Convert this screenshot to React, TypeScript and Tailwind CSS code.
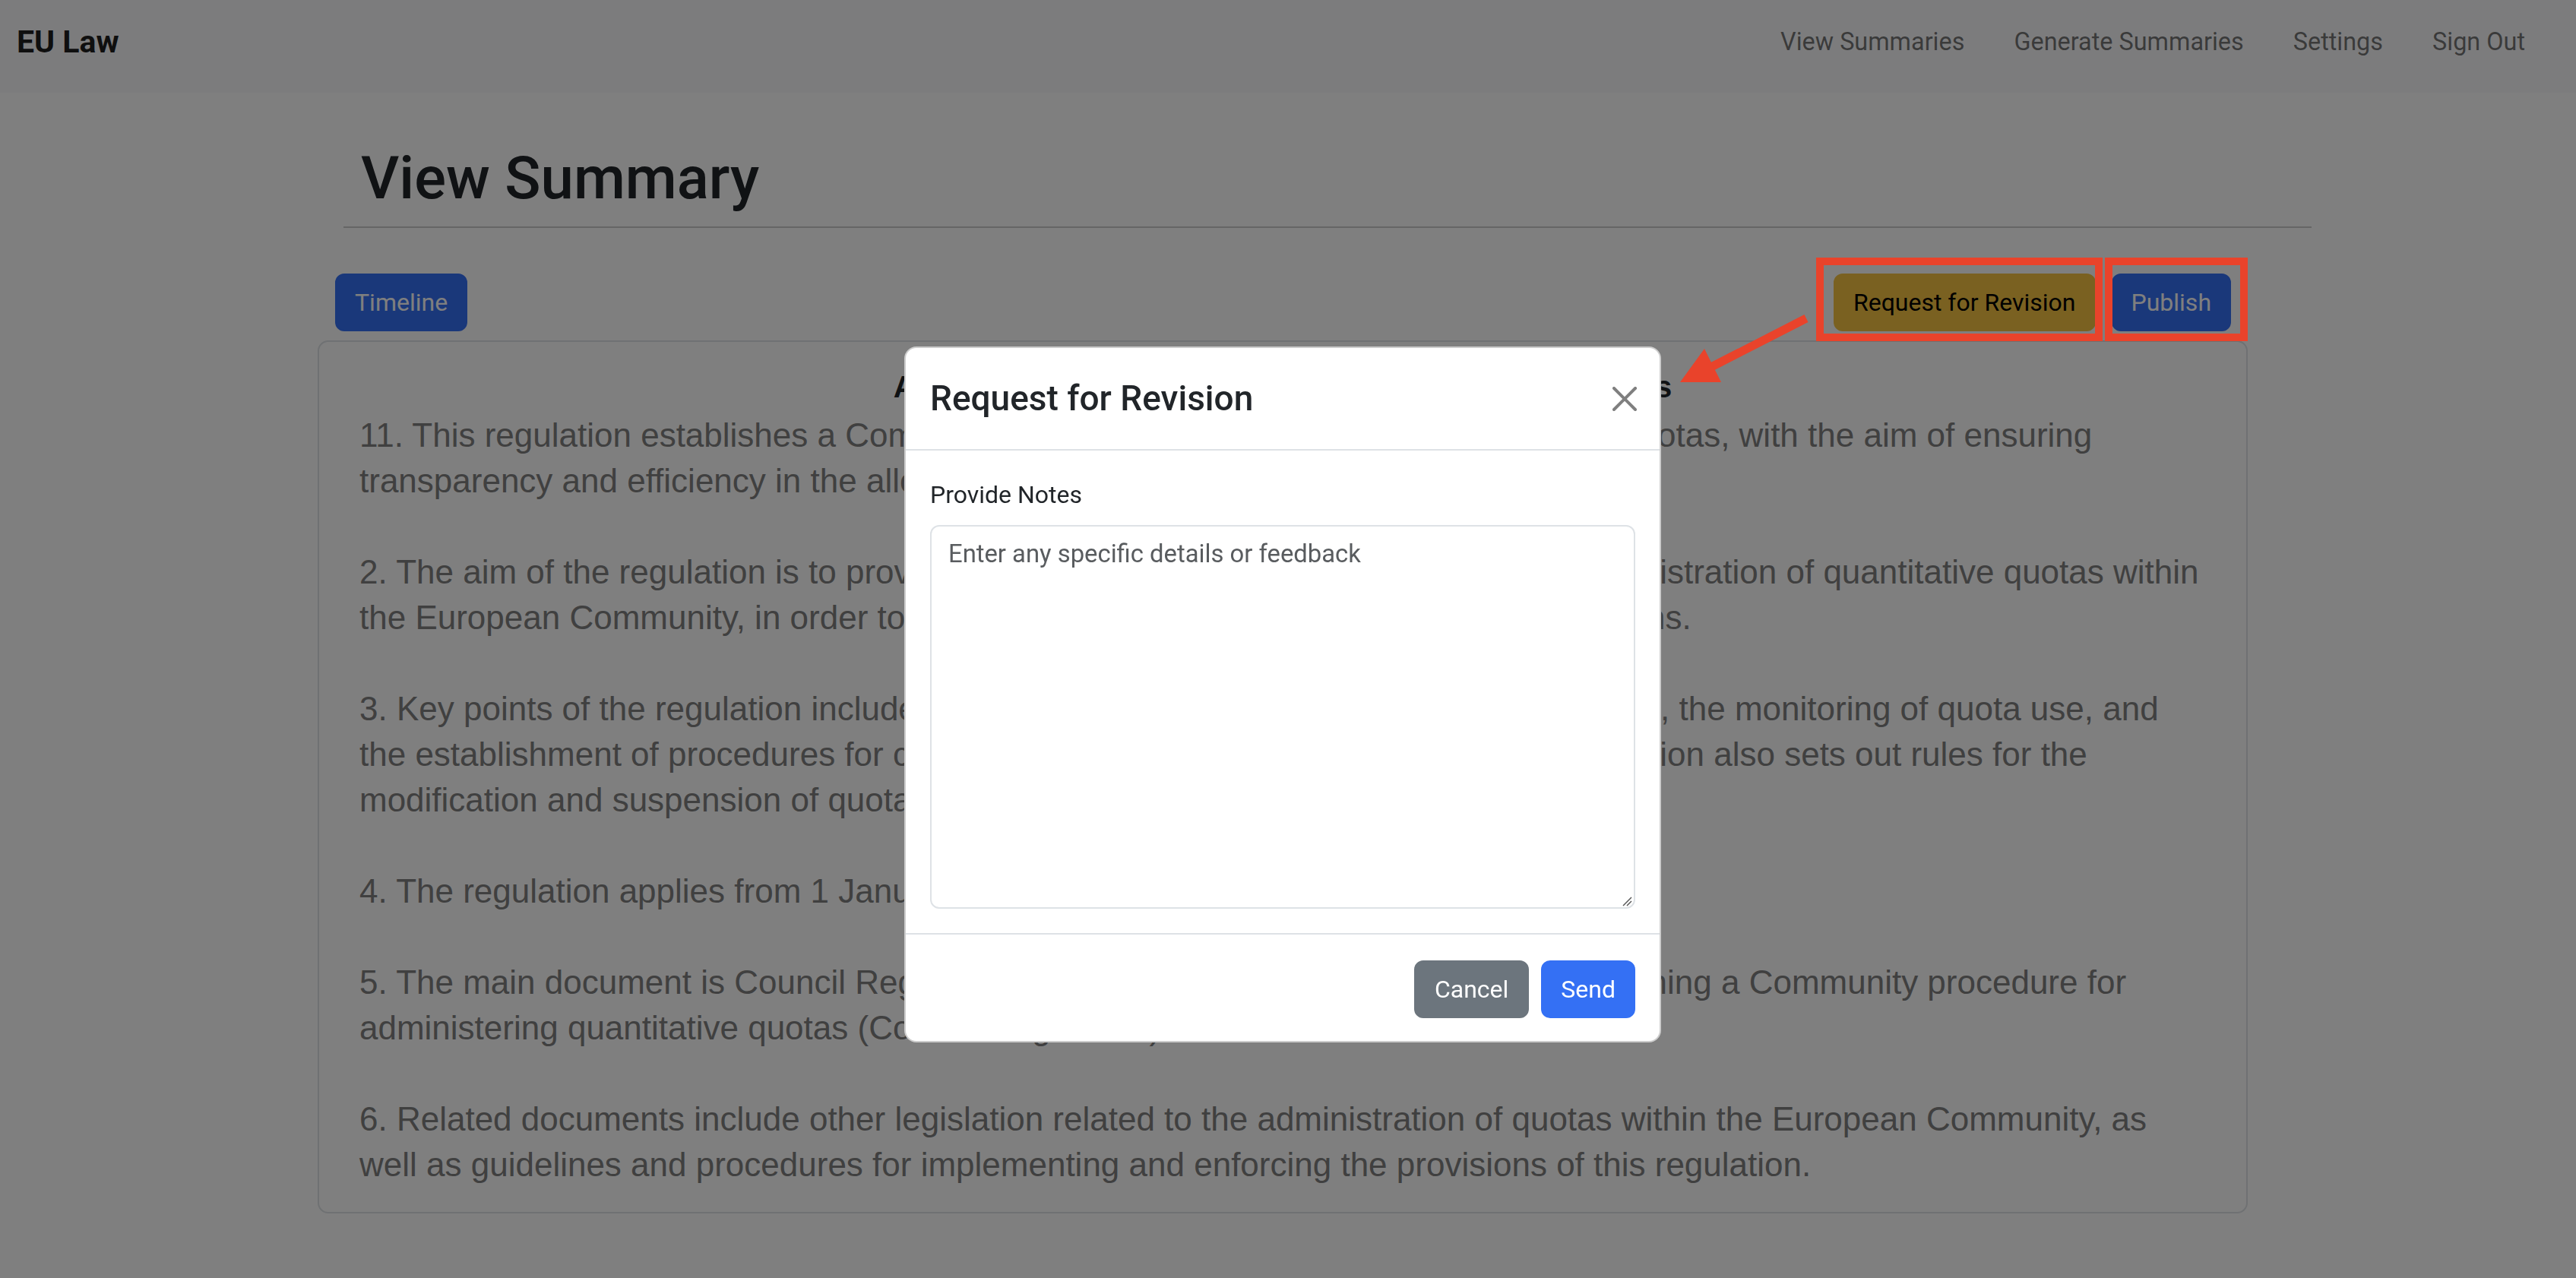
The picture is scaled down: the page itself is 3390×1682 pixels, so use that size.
import { useState } from "react";

const navLinks = ["View Summaries", "Generate Summaries", "Settings", "Sign Out"];

// Summary text, one entry per paragraph, one string per rendered line.
const summary: string[][] = [
  [
    "11. This regulation establishes a Community procedure for administering quantitative quotas, with the aim of ensuring",
    "transparency and efficiency in the allocation of quotas.",
  ],
  [
    "2. The aim of the regulation is to provide a clear and consistent framework for the administration of quantitative quotas within",
    "the European Community, in order to avoid distortions of competition and trade limitations.",
  ],
  [
    "3. Key points of the regulation include the rules for allocation of quotas among importers, the monitoring of quota use, and",
    "the establishment of procedures for checking compliance with these quotas. The regulation also sets out rules for the",
    "modification and suspension of quotas.",
  ],
  ["4. The regulation applies from 1 January 1995."],
  [
    "5. The main document is Council Regulation (EC) No. 520/94 of 7 March 1994, establishing a Community procedure for",
    "administering quantitative quotas (Council Regulation).",
  ],
  [
    "6. Related documents include other legislation related to the administration of quotas within the European Community, as",
    "well as guidelines and procedures for implementing and enforcing the provisions of this regulation.",
  ],
];

function CloseIcon() {
  return (
    <svg viewBox="0 0 16 16" className="h-[32px] w-[32px]" fill="#000" fillOpacity={0.5}>
      <path d="M.293.293a1 1 0 0 1 1.414 0L8 6.586 14.293.293a1 1 0 1 1 1.414 1.414L9.414 8l6.293 6.293a1 1 0 0 1-1.414 1.414L8 9.414l-6.293 6.293a1 1 0 0 1-1.414-1.414L6.586 8 .293 1.707a1 1 0 0 1 0-1.414z" />
    </svg>
  );
}

export default function App() {
  const [notes, setNotes] = useState("");

  return (
    <div className="relative min-h-screen w-full bg-white font-[Roboto,sans-serif] text-[#212529]">
      {/* ---- Navbar ---- */}
      <nav className="flex h-[122px] items-start justify-between bg-[#f8f9fa] pl-[22px] pr-[67px] pt-[25px]">
        <a className="text-[41px] font-bold leading-[60px] text-black/90">EU Law</a>
        <ul className="flex h-[60px] items-center gap-[65px] text-[32.4px] text-black/55">
          {navLinks.map((l) => (
            <li key={l}>{l}</li>
          ))}
        </ul>
      </nav>

      {/* ---- Page ---- */}
      <main>
        <div className="ml-[452px] mt-[67px] w-[2590px] border-b-2 border-[#cccccc] pb-[17px]">
          <h1 className="pl-[23px] text-[78px] font-medium leading-[92px]">View Summary</h1>
        </div>

        <div className="ml-[441px] mt-[60px] flex w-[2495px] items-center justify-between text-[32px] leading-[48px]">
          <button className="h-[76px] rounded-[12px] border-2 border-[#3470f4] bg-[#3470f4] px-[24px] text-white">
            Timeline
          </button>
          <div className="flex gap-[21px]">
            <button className="h-[76px] rounded-[12px] border-2 border-[#f5c342] bg-[#f5c342] px-[24px] text-black">
              Request for Revision
            </button>
            <button className="h-[76px] rounded-[12px] border-2 border-[#3470f4] bg-[#3470f4] px-[24px] text-white">
              Publish
            </button>
          </div>
        </div>

        <div className="ml-[418px] mt-[12px] w-[2540px] rounded-[14px] border-2 border-[#dee2e6] px-[53px] pb-[32px] pt-[35px] font-['Liberation_Sans',Arial,sans-serif]">
          <h2 className="mb-[10px] text-center text-[40px] font-bold leading-[48px] text-[#212529]">
            Administration of the Community Quantitative Quotas
          </h2>
          <div className="text-[44px] leading-[60px] text-[#808080]">
            {summary.map((para, i) => (
              <p key={i} className={i === 0 ? "" : "mt-[60px]"}>
                {para.map((line) => (
                  <span key={line} className="block whitespace-pre">
                    {line}
                  </span>
                ))}
              </p>
            ))}
          </div>
        </div>
      </main>

      {/* ---- Modal backdrop ---- */}
      <div className="fixed inset-0 z-10 bg-black/50" />

      {/* ---- Modal ---- */}
      <div className="fixed left-[1190px] top-[456px] z-20 w-[996px] rounded-[16px] border-2 border-black/20 bg-white">
        <div className="flex items-center justify-between border-b-2 border-[#dee2e6] py-[40px] pl-[32px] pr-[30px]">
          <h5 className="text-[46px] font-medium leading-[53px]">Request for Revision</h5>
          <button aria-label="Close">
            <CloseIcon />
          </button>
        </div>
        <div className="px-[32px] pb-[32px] pt-[34px]">
          <label className="mb-[16px] block text-[32px] leading-[48px]">Provide Notes</label>
          <div className="relative">
            <textarea
              value={notes}
              onChange={(e) => setNotes(e.target.value)}
              placeholder="Enter any specific details or feedback"
              className="block h-[505px] w-full resize-none rounded-[12px] border-2 border-[#dee2e6] px-[22px] py-[12px] text-[32.8px] leading-[48px] outline-none placeholder:text-[#595c5f]"
            />
            <svg
              viewBox="0 0 14 14"
              className="pointer-events-none absolute bottom-[3px] right-[4px] h-[14px] w-[14px]"
              stroke="#555"
              strokeWidth={1.4}
            >
              <line x1="2" y1="13" x2="13" y2="2" />
              <line x1="7" y1="13" x2="13" y2="7" />
            </svg>
          </div>
        </div>
        <div className="flex justify-end gap-[16px] border-t-2 border-[#dee2e6] px-[32px] pb-[30px] pt-[34px] text-[32px] leading-[48px]">
          <button className="h-[76px] rounded-[12px] border-2 border-[#6c757d] bg-[#6c757d] px-[25px] text-white">
            Cancel
          </button>
          <button className="h-[76px] rounded-[12px] border-2 border-[#3470f4] bg-[#3470f4] px-[24px] text-white">
            Send
          </button>
        </div>
      </div>

      {/* ---- Red annotation over the screenshot ---- */}
      <svg
        className="pointer-events-none absolute left-0 top-0 z-30 h-[1682px] w-[3390px]"
        viewBox="0 0 3390 1682"
        fill="none"
      >
        <rect x="2395" y="344" width="367" height="100" stroke="#e9432b" strokeWidth="10" />
        <rect x="2775" y="344" width="178" height="100" stroke="#e9432b" strokeWidth="10" />
        <line x1="2377" y1="419" x2="2250" y2="484" stroke="#e9432b" strokeWidth="11" />
        <polygon points="2211,503 2243,459 2265,503" fill="#e9432b" />
      </svg>
    </div>
  );
}
